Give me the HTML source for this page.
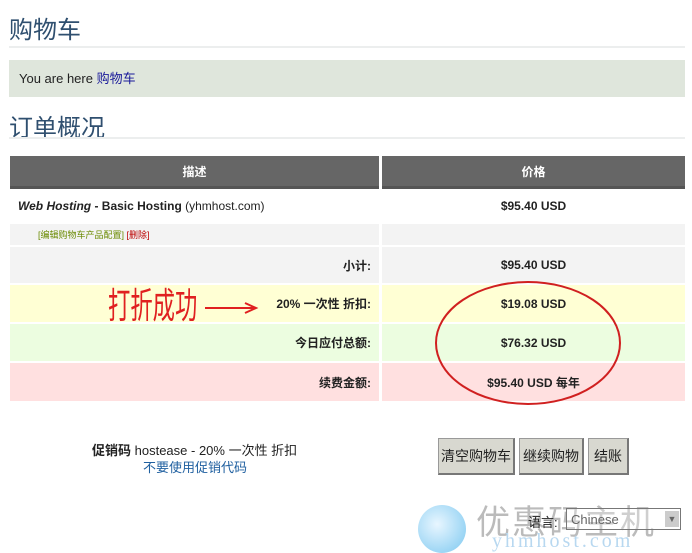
<!DOCTYPE html>
<html><head><meta charset="utf-8"><style>
body{margin:0;width:692px;height:552px;background:#fff;font-family:"Liberation Sans","Noto Sans CJK SC",sans-serif;position:relative;overflow:hidden}
.a{position:absolute}
h1{position:absolute;margin:0;font-weight:normal;font-size:24px;color:#2f4f6f;left:9px}
.hr{position:absolute;left:9px;width:676px;height:2px;background:#eceeee}
.L,.R{position:absolute;font-size:12px;font-weight:bold;color:#222;display:flex;align-items:center;box-sizing:border-box}
.L{left:10px;width:369px;padding:0 8px;justify-content:flex-end}
.R{left:382px;width:303px;justify-content:center}
.H{background:#666;color:#fff;border-bottom:3px solid #555;justify-content:center}
.btn{position:absolute;top:438px;height:34px;background:#d8d8d0;border:1px solid #999;border-right:2px solid #777;border-bottom:2px solid #777;font-size:14px;line-height:34px;text-align:center;color:#222}
</style></head><body>
<h1 style="top:10px">购物车</h1>
<div class="hr" style="top:46px"></div>
<div class="a" style="left:9px;top:60px;width:676px;height:37px;background:#dfe6dc;font-size:13px;line-height:37px;color:#222"><span style="padding-left:10px">You are here <span style="color:#1a1a9a">购物车</span></span></div>
<h1 style="top:108px">订单概况</h1>
<div class="hr" style="top:137px"></div>

<div class="L H" style="top:156px;height:33px">描述</div><div class="R H" style="top:156px;height:33px">价格</div>
<div class="L" style="top:190px;height:32px;justify-content:flex-start;font-weight:normal"><span><b><i>Web Hosting</i> - Basic Hosting</b> (yhmhost.com)</span></div><div class="R" style="top:190px;height:32px">$95.40 USD</div>
<div class="L" style="top:224px;height:21px;background:#f3f3f3;justify-content:flex-start;padding-left:28px;font-size:9px;font-weight:normal"><span><span style="color:#6a8a00">[编辑购物车产品配置]</span> <span style="color:#b00">[删除]</span></span></div><div class="R" style="top:224px;height:21px;background:#f3f3f3"></div>
<div class="L" style="top:247px;height:36px;background:#f3f3f3">小计:</div><div class="R" style="top:247px;height:36px;background:#f3f3f3">$95.40 USD</div>
<div class="L" style="top:285px;height:37px;background:#ffffd4">20% 一次性 折扣:</div><div class="R" style="top:285px;height:37px;background:#ffffd4">$19.08 USD</div>
<div class="L" style="top:324px;height:37px;background:#ecfde0">今日应付总额:</div><div class="R" style="top:324px;height:37px;background:#ecfde0">$76.32 USD</div>
<div class="L" style="top:363px;height:38px;background:#ffe0e0">续费金额:</div><div class="R" style="top:363px;height:38px;background:#ffe0e0">$95.40 USD 每年</div>

<div class="a" style="left:108px;top:286px;font-size:36px;color:#e02020;transform:scaleX(0.62);transform-origin:left;line-height:40px">打折成功</div>
<svg class="a" style="left:0;top:0" width="692" height="552"><path d="M205 308H255M245 303L256 308L245 313" stroke="#e02020" stroke-width="2" fill="none"/><ellipse cx="528" cy="343" rx="92" ry="61" stroke="#d02020" stroke-width="2" fill="none"/></svg>
<div class="a" style="left:92px;top:440px;font-size:13px;color:#222"><b>促销码</b> hostease - 20% 一次性 折扣</div>
<div class="a" style="left:143px;top:457px;font-size:13px;color:#2060a0">不要使用促销代码</div>
<div class="btn" style="left:438px;width:74px">清空购物车</div>
<div class="btn" style="left:519px;width:62px">继续购物</div>
<div class="btn" style="left:588px;width:38px">结账</div>
<div class="a" style="left:418px;top:505px;width:48px;height:48px;border-radius:50%;background:radial-gradient(circle at 40% 40%,#e8f6ff,#7cc8f0)"></div>
<div class="a" style="left:476px;top:495px;font-size:34px;color:#bbb;letter-spacing:2px">优惠码主机</div>
<div class="a" style="left:492px;top:530px;font-size:20px;color:#b8d8f0;font-family:'Liberation Serif',serif;letter-spacing:3px">yhmhost.com</div>
<div class="a" style="left:528px;top:512px;font-size:13px;color:#222">语言:</div>
<div class="a" style="left:566px;top:508px;width:115px;height:22px;border:1px solid #777;background:rgba(255,255,255,.3);font-size:13px;line-height:22px;color:#666;padding-left:4px;box-sizing:border-box">Chinese<span style="position:absolute;right:1px;top:2px;width:14px;height:16px;background:#ccc;font-size:9px;text-align:center;line-height:16px">▼</span></div>
</body></html>
